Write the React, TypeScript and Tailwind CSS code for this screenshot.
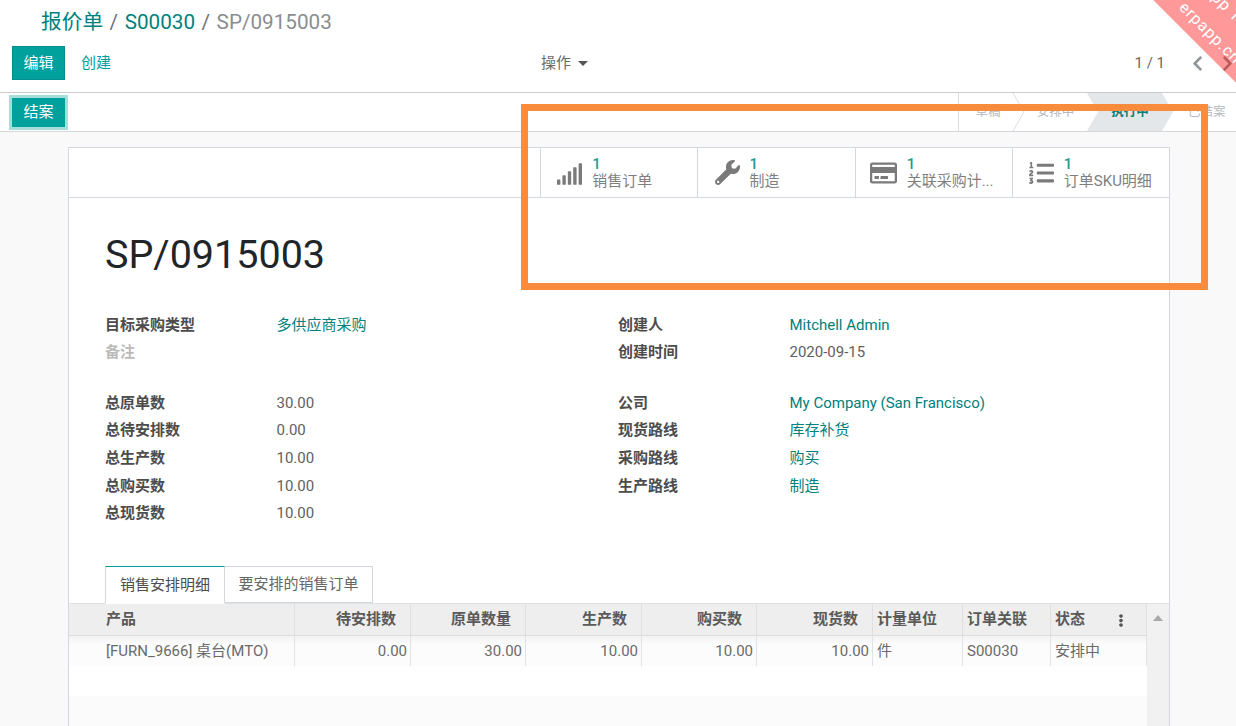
import React from 'react';
import { FaSignal, FaWrench, FaRegCreditCard, FaListOl, FaChevronLeft, FaChevronRight, FaEllipsisV } from 'react-icons/fa';

const font = 'font-["Roboto","Noto_Sans_CJK_SC",sans-serif]';

type Row = { label: string; value?: string; link?: boolean; muted?: boolean };

const leftTop: Row[] = [
  { label: '目标采购类型', value: '多供应商采购', link: true },
  { label: '备注', muted: true },
];
const leftBottom: Row[] = [
  { label: '总原单数', value: '30.00' },
  { label: '总待安排数', value: '0.00' },
  { label: '总生产数', value: '10.00' },
  { label: '总购买数', value: '10.00' },
  { label: '总现货数', value: '10.00' },
];
const rightTop: Row[] = [
  { label: '创建人', value: 'Mitchell Admin', link: true },
  { label: '创建时间', value: '2020-09-15' },
];
const rightBottom: Row[] = [
  { label: '公司', value: 'My Company (San Francisco)', link: true },
  { label: '现货路线', value: '库存补货', link: true },
  { label: '采购路线', value: '购买', link: true },
  { label: '生产路线', value: '制造', link: true },
];

const columns = [
  { title: '产品', value: '[FURN_9666] 桌台(MTO)', kind: 'first' },
  { title: '待安排数', value: '0.00', kind: 'num' },
  { title: '原单数量', value: '30.00', kind: 'num' },
  { title: '生产数', value: '10.00', kind: 'num' },
  { title: '购买数', value: '10.00', kind: 'num' },
  { title: '现货数', value: '10.00', kind: 'num' },
  { title: '计量单位', value: '件', kind: 'text' },
  { title: '订单关联', value: 'S00030', kind: 'text' },
  { title: '状态', value: '安排中', kind: 'text' },
];

const stats = [
  { label: '销售订单', icon: <FaSignal className="w-[27px] h-[22px] mt-[3px] ml-[15px]" /> },
  { label: '制造', icon: <FaWrench className="w-[25px] h-[25px] ml-[17px]" /> },
  { label: '关联采购计...', icon: <FaRegCreditCard className="w-[27px] h-[26px] ml-[14px]" /> },
  { label: '订单SKU明细', icon: <FaListOl className="w-[25px] h-[26px] ml-[16px]" /> },
];

function FieldRows({ rows }: { rows: Row[] }) {
  return (
    <div>
      {rows.map((r) => (
        <div key={r.label} className="flex h-[27.6px] items-center">
          <div className={`w-[171.5px] font-bold ${r.muted ? 'text-[#bbbbbb]' : 'text-[#4c4c4c]'}`}>{r.label}</div>
          {r.value && <div className={r.link ? 'text-[#00807d]' : 'text-[#5f5f5f]'}>{r.value}</div>}
        </div>
      ))}
    </div>
  );
}

export default function App() {
  return (
    <div className={`relative h-[726px] w-[1236px] overflow-hidden bg-[#f9f9f9] text-[15px] ${font}`}>
      {/* Control panel */}
      <div className="h-[93px] bg-white border-b border-[#cccccc] pl-[12px] pr-[6px]">
        <div className="h-[46px] pl-[29px] flex items-center pb-[1px] text-[20.7px] text-[#8a8d90]">
          <span className="text-[#00807d]">报价单</span>
          <span className="mx-[6.5px] text-[#6f7478]">/</span>
          <span className="text-[#00807d]">S00030</span>
          <span className="mx-[6.5px] text-[#6f7478]">/</span>
          <span>SP/0915003</span>
        </div>
        <div className="h-[34px] flex items-center">
          <button className="w-[53px] h-[34px] bg-[#00a09d] text-white border border-[#008f8c]">编辑</button>
          <button className="ml-[16px] text-[#00a09d]">创建</button>
          <div className="ml-[430px] flex items-center text-[#6a6a6a]">
            操作
            <span className="ml-[7px] mt-[1px] w-0 h-0 border-x-[5px] border-x-transparent border-t-[5px] border-t-[#555555]" />
          </div>
          <div className="ml-auto flex items-center text-[#6a6a6a]">
            <span className="mr-[27px]">1 / 1</span>
            <FaChevronLeft className="w-[11px] h-[17px] text-[#8f9499] mr-[19px]" />
            <FaChevronRight className="w-[11px] h-[17px] text-[#8f9499] mr-[-3px]" />
          </div>
        </div>
      </div>

      {/* Status bar */}
      <div className="h-[39px] bg-white border-b border-[#d4d7db] pl-[12px] flex items-center justify-between">
        <button className="w-[53px] h-[29px] bg-[#00a09d] text-white ring-[3px] ring-[#a6dedc]">结案</button>
        <div className="flex h-full items-center text-[12.5px]">
          <div className="h-full w-px bg-[#d9dce0]" />
          <div className="relative h-full w-[54px] pl-[4px] flex items-center justify-center text-[#b5b9bd]">
            <svg className="absolute left-0 top-0 w-[66px] h-full overflow-visible" viewBox="0 0 66 38" preserveAspectRatio="none">
              <polyline points="54,0 65,19 54,38" fill="none" stroke="#d9dce0" strokeWidth="1" />
            </svg>
            <span className="relative">草稿</span>
          </div>
          <div className="relative h-full w-[74px] pl-[11px] flex items-center justify-center text-[#b5b9bd]">
            <span className="relative">安排中</span>
          </div>
          <div className="relative h-full w-[75px] pl-[11px] flex items-center justify-center">
            <svg className="absolute left-0 top-0 w-[86px] h-full" viewBox="0 0 86 38" preserveAspectRatio="none">
              <polygon points="0,0 75,0 86,19 75,38 0,38 11,19" fill="#e4e7ea" />
            </svg>
            <span className="relative font-bold text-[#00807d]">执行中</span>
          </div>
          <div className="relative h-full w-[74px] pl-[26px] flex items-center text-[#b5b9bd]">已结案</div>
        </div>
      </div>

      {/* Sheet */}
      <div className="ml-[68px] mt-[15px] w-[1102px] h-[600px] bg-white border border-[#d3d8de]">
        <div className="h-[50px] border-b border-[#d3d8de] flex justify-end">
          {stats.map((s) => (
            <div key={s.label} className="w-[157.2px] border-l border-[#d3d8de] flex items-center text-[#7a7a7a]">
              <div className="w-[51px] shrink-0 flex justify-start">{s.icon}</div>
              <div className="leading-[17px] pt-[1px]">
                <div className="font-medium text-[#1f9c92] text-[15px]">1</div>
                <div className="text-[15px] text-[#7f7f7f] whitespace-nowrap">{s.label}</div>
              </div>
            </div>
          ))}
        </div>

        <div className="px-[36px] pt-[32px]">
          <h1 className="text-[39.5px] leading-[50px] text-[#212529]">SP/0915003</h1>
          <div className="mt-[31px] flex">
            <div className="w-[513px]">
              <FieldRows rows={leftTop} />
              <div className="h-[23px]" />
              <FieldRows rows={leftBottom} />
            </div>
            <div>
              <FieldRows rows={rightTop} />
              <div className="h-[23px]" />
              <FieldRows rows={rightBottom} />
            </div>
          </div>
        </div>

        {/* Tabs */}
        <div className="mt-[39px] pl-[36px] flex h-[38px] text-[15px] relative z-10">
          <div className="w-[120px] h-[38px] flex items-center justify-center bg-white border border-[#d3d8de] border-t-[#00a09d] border-b-white text-[#4c4c4c]">销售安排明细</div>
          <div className="w-[148px] h-[37px] flex items-center justify-center border border-l-0 border-[#d3d8de] text-[#666666]">要安排的销售订单</div>
        </div>

        {/* Table */}
        <div className="-mt-px flex border-t border-[#dfe2e5]">
          <div className="w-[1078px]">
            <div className="grid grid-cols-[226px_116px_115px_116px_115px_116px_90px_88px_96px] h-[32px] bg-[#eeeeee] border-b border-[#dddddd] font-bold text-[#5a5a5a]">
              {columns.map((c) => (
                <div
                  key={c.title}
                  className={`relative flex items-center border-r border-[#e0e0e0] ${
                    c.kind === 'first' ? 'pl-[37px]' : c.kind === 'num' ? 'justify-end pr-[14px]' : 'pl-[4px]'
                  }`}
                >
                  {c.title}
                  {c.title === '状态' && <FaEllipsisV className="absolute right-[19px] top-[10px] w-[12px] h-[13px] text-[#555555]" />}
                </div>
              ))}
            </div>
            <div className="grid grid-cols-[226px_116px_115px_116px_115px_116px_90px_88px_96px] h-[30px] bg-gradient-to-b from-[#f3f3f3] to-[#fcfcfc] to-[30%] text-[#6a6a6a]">
              {columns.map((c) => (
                <div
                  key={c.title}
                  className={`flex items-center border-r border-[#dfe3e8] ${
                    c.kind === 'first' ? 'pl-[37px]' : c.kind === 'num' ? 'justify-end pr-[3px]' : 'pl-[4px]'
                  }`}
                >
                  {c.value}
                </div>
              ))}
            </div>
            <div className="h-[30px] bg-white" />
            <div className="h-[40px] bg-[#fbfbfb]" />
          </div>
          <div className="w-[22px] bg-[#f1f1f1] flex justify-center pt-[11px]">
            <span className="w-0 h-0 border-x-[5px] border-x-transparent border-b-[6px] border-b-[#a9a9a9]" />
          </div>
        </div>
      </div>

      {/* Database ribbon */}
      <div className="absolute top-0 right-0 w-[200px] h-[200px] overflow-hidden pointer-events-none">
        <div className="absolute left-[84px] top-[-8px] w-[200px] h-[62px] rotate-45 bg-[#ff0000]/40 text-white text-center text-[16px] leading-[30px] tracking-[1px]">
          <div>App Test</div>
          <div>erpapp.cn</div>
        </div>
      </div>

      {/* Annotation frame */}
      <div className="absolute left-[521px] top-[104px] w-[687px] h-[186px] border-[7px] border-[#f98b3c] pointer-events-none" />
    </div>
  );
}
